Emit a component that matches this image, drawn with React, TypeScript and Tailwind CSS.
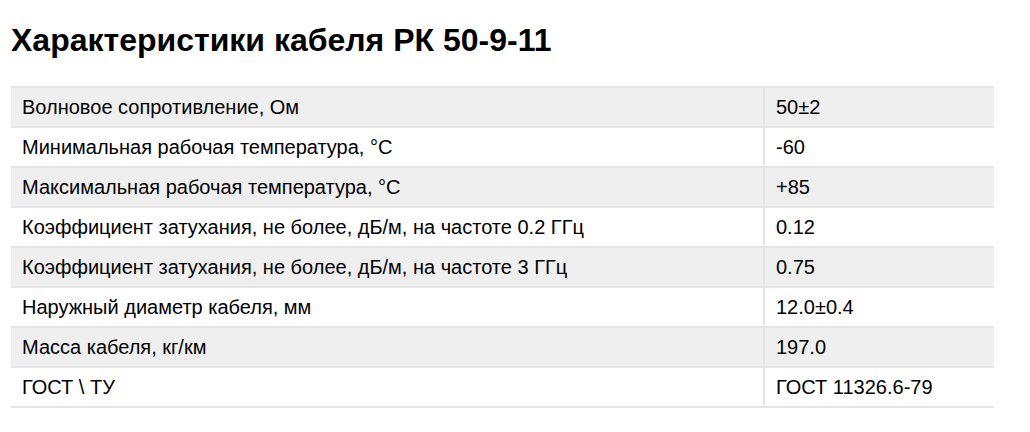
const rows: [string, string][] = [
  ["Волновое сопротивление, Ом", "50±2"],
  ["Минимальная рабочая температура, °С", "-60"],
  ["Максимальная рабочая температура, °С", "+85"],
  ["Коэффициент затухания, не более, дБ/м, на частоте 0.2 ГГц", "0.12"],
  ["Коэффициент затухания, не более, дБ/м, на частоте 3 ГГц", "0.75"],
  ["Наружный диаметр кабеля, мм", "12.0±0.4"],
  ["Масса кабеля, кг/км", "197.0"],
  ["ГОСТ \\ ТУ", "ГОСТ 11326.6-79"],
];

export default function App() {
  return (
    <div className="w-[1030px] h-[432px] bg-white pl-[11px] pr-[36px] pt-[22px] font-['Liberation_Sans',Arial,sans-serif] text-black">
      <h1 className="text-[32px] font-bold leading-[36px]">Характеристики кабеля РК 50-9-11</h1>
      <table className="mt-[28px] w-[983px] border-collapse text-[20px]">
        <tbody>
          {rows.map(([k, v], i) => (
            <tr key={k} className={i % 2 === 0 ? "bg-[#f0efef]" : "bg-white"}>
              <td className="h-[40px] w-[753px] border-y-2 border-r-2 border-[#e4e4e4] px-[11px] py-0 leading-[22px]">{k}</td>
              <td className="h-[40px] border-y-2 border-[#e4e4e4] px-[11px] py-0 leading-[22px]">{v}</td>
            </tr>
          ))}
        </tbody>
      </table>
    </div>
  );
}
